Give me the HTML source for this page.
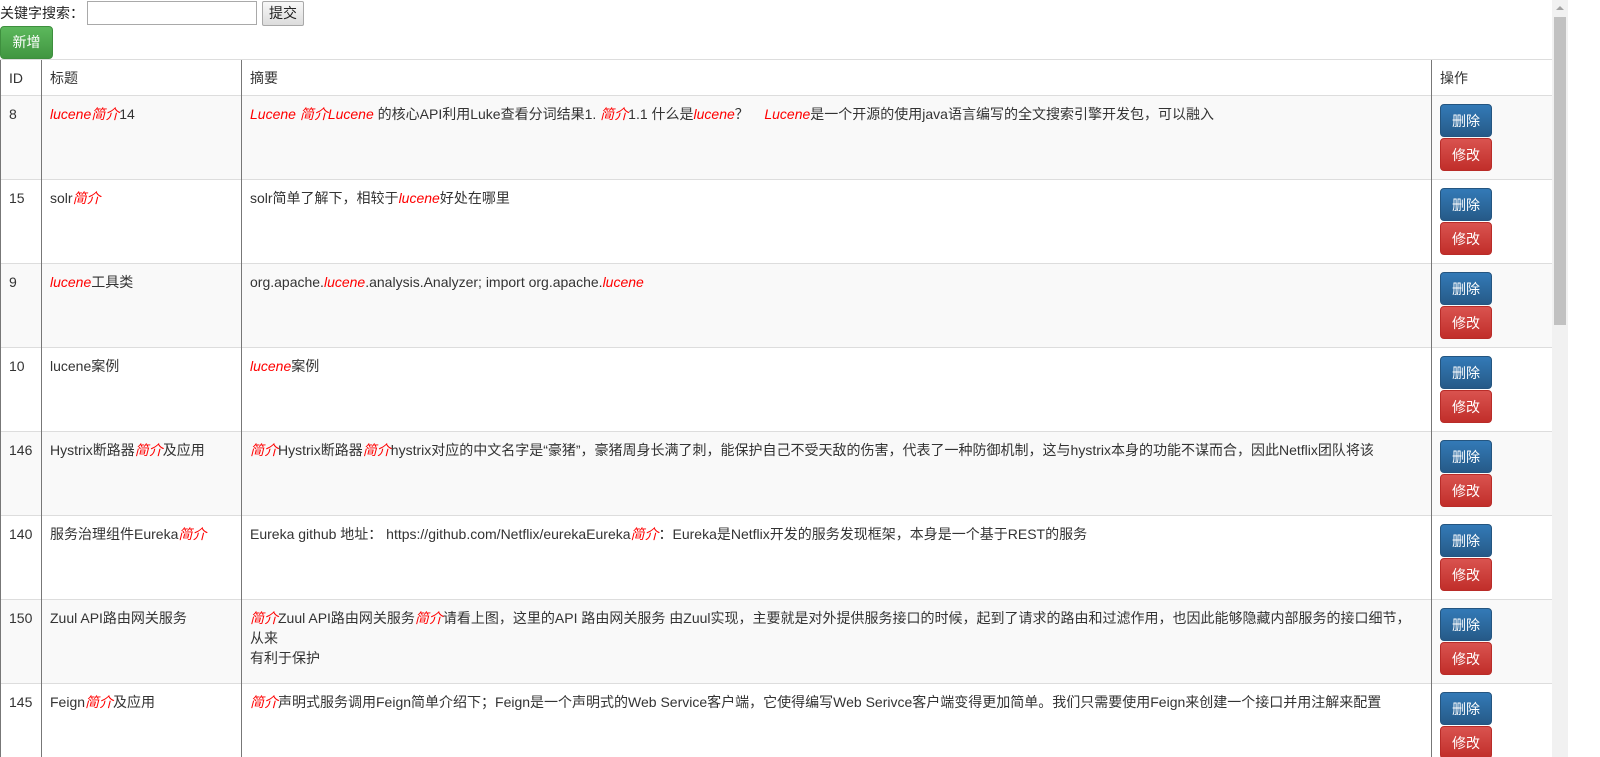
<!DOCTYPE html>
<html><head><meta charset="utf-8"><style>
html,body{margin:0;padding:0;background:#fff;overflow:hidden}
body{width:1600px;height:757px;position:relative;font-family:"Liberation Sans","Noto Sans CJK SC",sans-serif;font-size:14px;color:#333}
.top{position:absolute;left:0;top:1px;height:24px;line-height:24px;color:#222}
.top input{position:absolute;left:87px;top:0;width:166px;height:20px;border:1px solid #a9a9a9;padding:1px;margin:0}
.top .sub{position:absolute;left:262px;top:0;width:40px;height:23px;border:1px solid #a9a9a9;background:linear-gradient(#f8f8f8,#dcdcdc);border-radius:2px;text-align:center;line-height:22px;font-size:14px;color:#222}
.add{position:absolute;left:0;top:26px;width:53px;height:33px;background:linear-gradient(#5cb85c,#419641);border:1px solid #3e8f3e;box-sizing:border-box;border-radius:4px;color:#fff;text-align:center;line-height:31px;font-size:14px}
table{position:absolute;left:0;top:59px;width:1552px;border-collapse:collapse;border:1px solid #333;table-layout:fixed}
td,th{padding:8px;line-height:20px;vertical-align:top;text-align:left;font-weight:normal;border-left:1px solid #777;border-top:1px solid #ddd}
th{height:20px;padding-bottom:7px;padding-top:8px}
tr.g td{background:#f9f9f9}
td{height:66px}
i{color:#f00}
.b{display:block;width:52px;height:33px;border-radius:4px;color:#fff;text-align:center;line-height:33px;box-sizing:border-box}
.d{background:linear-gradient(#337ab7,#265a88);border:1px solid #245580}
.e{background:linear-gradient(#d9534f,#c12e2a);border:1px solid #b92c28;margin-top:1px}
.sb{position:absolute;left:1552px;top:0;width:16px;height:757px;background:#f1f1f1}
.th{position:absolute;left:1554px;top:17px;width:12px;height:308px;background:#c1c1c1}
.ar{position:absolute;left:1556px;top:6px;width:0;height:0;border-left:4px solid transparent;border-right:4px solid transparent;border-bottom:4px solid #a3a3a3}
</style></head><body>
<div class="top">关键字搜索：<input type="text"><span class="sub">提交</span></div>
<div class="add">新增</div>
<table>
<colgroup><col style="width:41px"><col style="width:200px"><col style="width:1190px"><col style="width:121px"></colgroup>
<tr><th>ID</th><th>标题</th><th>摘要</th><th>操作</th></tr>
<tr class="g"><td>8</td><td><i>lucene简介</i>14</td><td><i>Lucene 简介Lucene</i> 的核心API利用Luke查看分词结果1. <i>简介</i>1.1 什么是<i>lucene</i>？&nbsp;&nbsp;&nbsp; <i>Lucene</i>是一个开源的使用java语言编写的全文搜索引擎开发包，可以融入</td><td><span class="b d">删除</span><span class="b e">修改</span></td></tr>
<tr><td>15</td><td>solr<i>简介</i></td><td>solr简单了解下，相较于<i>lucene</i>好处在哪里</td><td><span class="b d">删除</span><span class="b e">修改</span></td></tr>
<tr class="g"><td>9</td><td><i>lucene</i>工具类</td><td>org.apache.<i>lucene</i>.analysis.Analyzer; import org.apache.<i>lucene</i></td><td><span class="b d">删除</span><span class="b e">修改</span></td></tr>
<tr><td>10</td><td>lucene案例</td><td><i>lucene</i>案例</td><td><span class="b d">删除</span><span class="b e">修改</span></td></tr>
<tr class="g"><td>146</td><td>Hystrix断路器<i>简介</i>及应用</td><td><i>简介</i>Hystrix断路器<i>简介</i>hystrix对应的中文名字是“豪猪”，豪猪周身长满了刺，能保护自己不受天敌的伤害，代表了一种防御机制，这与hystrix本身的功能不谋而合，因此Netflix团队将该</td><td><span class="b d">删除</span><span class="b e">修改</span></td></tr>
<tr><td>140</td><td>服务治理组件Eureka<i>简介</i></td><td>Eureka github 地址： https://github.com/Netflix/eurekaEureka<i>简介</i>：Eureka是Netflix开发的服务发现框架，本身是一个基于REST的服务</td><td><span class="b d">删除</span><span class="b e">修改</span></td></tr>
<tr class="g"><td>150</td><td>Zuul API路由网关服务</td><td><i>简介</i>Zuul API路由网关服务<i>简介</i>请看上图，这里的API 路由网关服务 由Zuul实现，主要就是对外提供服务接口的时候，起到了请求的路由和过滤作用，也因此能够隐藏内部服务的接口细节，从来<br>有利于保护</td><td><span class="b d">删除</span><span class="b e">修改</span></td></tr>
<tr><td>145</td><td>Feign<i>简介</i>及应用</td><td><i>简介</i>声明式服务调用Feign简单介绍下；Feign是一个声明式的Web Service客户端，它使得编写Web Serivce客户端变得更加简单。我们只需要使用Feign来创建一个接口并用注解来配置</td><td><span class="b d">删除</span><span class="b e">修改</span></td></tr>
</table>
<div class="sb"></div><div class="th"></div><div class="ar"></div>
</body></html>
